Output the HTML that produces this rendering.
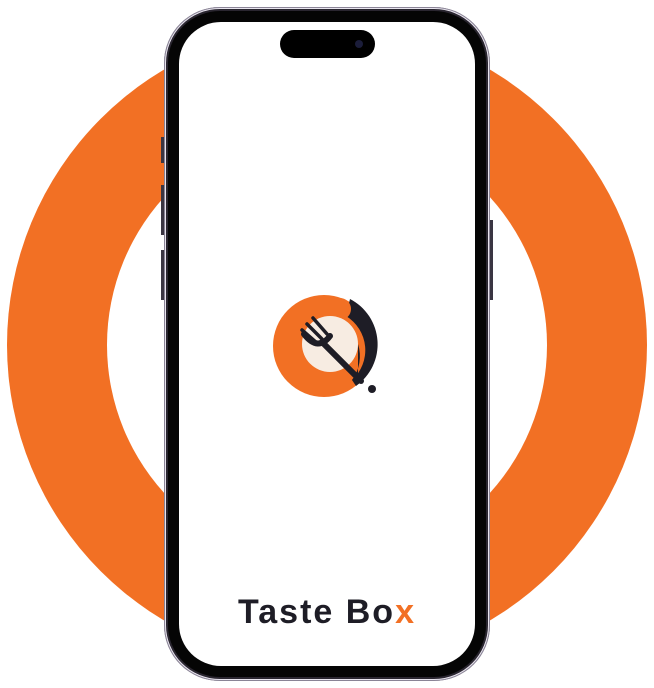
<!DOCTYPE html>
<html><head><meta charset="utf-8"><style>
html,body{margin:0;padding:0;background:#fff;}
body{width:654px;height:688px;position:relative;overflow:hidden;}
.ring{position:absolute;left:7px;top:25px;width:640px;height:640px;border-radius:50%;background:#F27024;}
.hole{position:absolute;left:107px;top:125px;width:440px;height:440px;border-radius:50%;background:#fff;}
.phone{position:absolute;left:164px;top:7px;width:326px;height:674px;border-radius:56px;background:#2a2630;box-shadow:inset 0 0 0 1px #8a8496, inset 0 0 0 2px #e8e4ee;}
.bezel{position:absolute;left:168px;top:11px;width:318px;height:666px;border-radius:52px;background:#050505;}
.screen{position:absolute;left:179px;top:22px;width:296px;height:644px;border-radius:42px;background:#fff;}
.island{position:absolute;left:280px;top:30px;width:95px;height:28px;border-radius:14px;background:#000;}
.cam{position:absolute;left:355px;top:40px;width:8px;height:8px;border-radius:50%;background:#1b1d3a;}
.btn{position:absolute;width:3px;background:#3a3542;}
.title{position:absolute;left:0;width:654px;top:593px;text-align:center;font:bold 34px "Liberation Sans",sans-serif;letter-spacing:2px;color:#1e1d26;}
.title span{color:#F27024;}
</style></head><body>
<div class="ring"></div><div class="hole"></div>
<div class="btn" style="left:161px;top:137px;height:26px"></div>
<div class="btn" style="left:161px;top:185px;height:50px"></div>
<div class="btn" style="left:161px;top:250px;height:50px"></div>
<div class="btn" style="left:490px;top:220px;height:80px"></div>
<div class="phone"></div><div class="bezel"></div><div class="screen"></div>
<div class="island"></div><div class="cam"></div>
<svg style="position:absolute;left:0;top:0" width="654" height="688">
<circle cx="324" cy="346" r="51" fill="#F27024"/>
<path d="M350 299 A51 51 0 0 1 356 386 L352 380 A40 40 0 0 0 346 316 Z" fill="#1e1d26"/>
<circle cx="340" cy="309" r="11" fill="#F27024"/>
<circle cx="330" cy="344" r="28" fill="#f7ece2"/>
<path d="M352 380 A40 40 0 0 0 358 344 L358 380 Z" fill="#1e1d26"/>
<g stroke="#1e1d26" stroke-linecap="round" fill="none">
<line x1="322" y1="342" x2="361" y2="381" stroke-width="6"/>
<path d="M302 330 L318 344 M307 324 L322 339 M313 318 L327 334" stroke-width="3.5"/>
<path d="M304 334 Q318 352 330 336" stroke-width="6"/>
</g>
<circle cx="372" cy="389" r="4" fill="#1e1d26"/>
</svg>
<div class="title">Taste Bo<span>x</span></div>
</body></html>
